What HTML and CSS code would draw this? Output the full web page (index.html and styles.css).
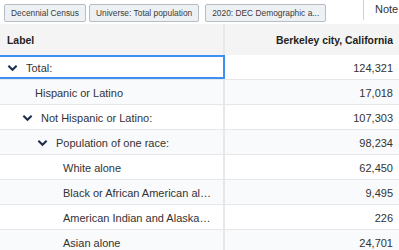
FILE: index.html
```html
<!DOCTYPE html>
<html>
<head>
<meta charset="utf-8">
<link rel="stylesheet" href="styles.css">
</head>
<body>
<div class="toolbar">
  <span class="chip">Decennial Census</span>
  <span class="chip">Universe: Total population</span>
  <span class="chip">2020: DEC Demographic a...</span>
  <div class="note">Note</div>
</div>
<div class="table">
  <div class="row head">
    <div class="cell label">Label</div>
    <div class="cell value">Berkeley city, California</div>
  </div>
  <div class="row">
    <div class="cell label focus lvl0"><svg class="chev" viewBox="0 0 12 8"><path d="M1.5 1.5 L6 6 L10.5 1.5"/></svg>Total:</div>
    <div class="cell value">124,321</div>
  </div>
  <div class="row alt">
    <div class="cell label leaf1">Hispanic or Latino</div>
    <div class="cell value">17,018</div>
  </div>
  <div class="row">
    <div class="cell label lvl1"><svg class="chev" viewBox="0 0 12 8"><path d="M1.5 1.5 L6 6 L10.5 1.5"/></svg>Not Hispanic or Latino:</div>
    <div class="cell value">107,303</div>
  </div>
  <div class="row alt">
    <div class="cell label lvl2"><svg class="chev" viewBox="0 0 12 8"><path d="M1.5 1.5 L6 6 L10.5 1.5"/></svg>Population of one race:</div>
    <div class="cell value">98,234</div>
  </div>
  <div class="row">
    <div class="cell label leaf3">White alone</div>
    <div class="cell value">62,450</div>
  </div>
  <div class="row alt">
    <div class="cell label leaf3"><span class="trunc">Black or African American alone</span></div>
    <div class="cell value">9,495</div>
  </div>
  <div class="row">
    <div class="cell label leaf3"><span class="trunc">American Indian and Alaska Native alone</span></div>
    <div class="cell value">226</div>
  </div>
  <div class="row alt">
    <div class="cell label leaf3">Asian alone</div>
    <div class="cell value">24,701</div>
  </div>
</div>
</body>
</html>
```
FILE: styles.css
```css
html, body {
  margin: 0;
  padding: 0;
  background: #ffffff;
  font-family: "Liberation Sans", Arial, sans-serif;
  color: #333333;
  overflow: hidden;
}
.toolbar {
  display: flex;
  align-items: flex-start;
  gap: 3px;
  padding: 4px 0 0 4px;
  height: 20px;
}
.chip {
  font-size: 8.4px;
  height: 16px;
  line-height: 16px;
  padding: 0 6px;
  border: 1px solid #b7bdc4;
  border-radius: 2px;
  background: #eef1f4;
  color: #3a3a3a;
  white-space: nowrap;
}
.chip + .chip + .chip {
  margin-left: 3px;
}
.note {
  margin-left: auto;
  margin-top: -4px;
  height: 20px;
  border-left: 1px solid #c9d3e0;
  padding-left: 11px;
  width: 24px;
  font-size: 11px;
  line-height: 18px;
  color: #333333;
}
.table {
  margin-top: 0;
}
.row {
  display: grid;
  grid-template-columns: 225px 1fr;
  height: 25px;
  border-bottom: 1px solid #e6e7ea;
  box-sizing: border-box;
}
.row.alt {
  background: #f9fafc;
}
.row.head {
  height: 31px;
  background: #f4f4f4;
  border-bottom: none;
}
.cell {
  display: flex;
  align-items: center;
  font-size: 11px;
  white-space: nowrap;
  overflow: hidden;
  padding-top: 2px;
  box-sizing: border-box;
}
.cell.label {
  border-right: 2px solid #e8e8e8;
  padding-left: 7px;
}
.cell.value {
  justify-content: flex-end;
  padding-right: 6px;
}
.head .cell {
  font-weight: bold;
  color: #222222;
  font-size: 10.4px;
}
.cell.focus {
  box-shadow: inset 0 2px 0 #3d8ff2, inset 0 -2px 0 #3d8ff2;
  border-right-color: #3d8ff2;
}
.chev {
  width: 11px;
  height: 8px;
  margin-right: 8px;
  flex: none;
}
.chev path {
  fill: none;
  stroke: #1c2d4c;
  stroke-width: 2.2;
}
.cell.lvl0 { padding-left: 7px; }
.cell.lvl1 { padding-left: 22px; }
.cell.lvl2 { padding-left: 37px; }
.cell.leaf1 { padding-left: 35px; }
.cell.leaf3 { padding-left: 63px; }
.trunc {
  display: block;
  overflow: hidden;
  text-overflow: ellipsis;
  max-width: 148px;
}
```
